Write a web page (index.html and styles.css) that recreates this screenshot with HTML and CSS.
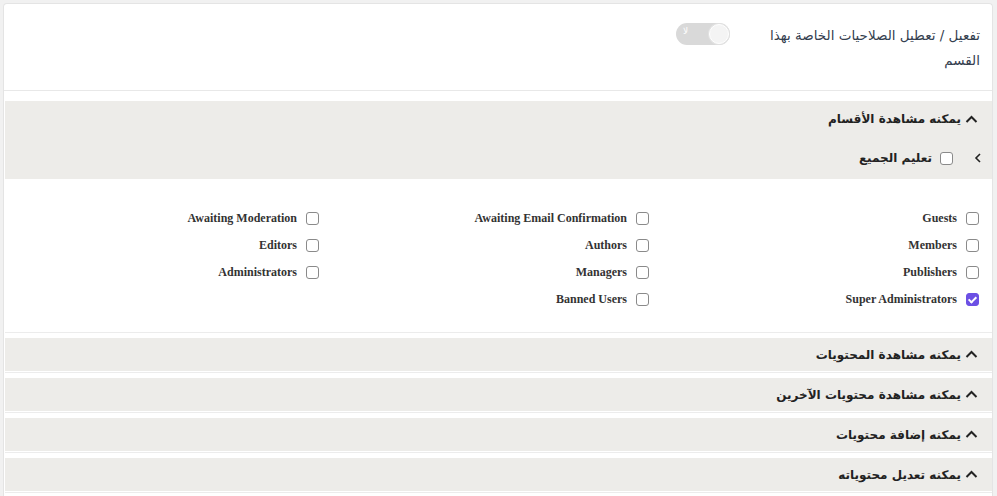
FILE: index.html
```html
<!DOCTYPE html>
<html lang="ar" dir="rtl">

<head>
    <meta charset="UTF-8">
    <meta name="viewport" content="width=device-width, initial-scale=1.0">
    <title>الصلاحيات</title>
    <link rel="stylesheet" href="styles.css">
</head>

<body>

    <div class="card">

        <div class="switch-row">
            <div class="switch-label">تفعيل / تعطيل الصلاحيات الخاصة بهذا القسم</div>
            <div class="switch">
                <span class="switch-text">لا</span>
                <span class="knob"></span>
            </div>
        </div>

        <!-- first group, opened -->
        <div class="panel open">
            <div class="panel-head">
                <svg class="caret" viewBox="0 0 13 13"><polyline points="1.5,9 6.5,4 11.5,9" /></svg>
                <span>يمكنه مشاهدة الأقسام</span>
            </div>
            <div class="select-all">
                <svg class="chevron" viewBox="0 0 8 12"><polyline points="6,2 2,6 6,10" /></svg>
                <span class="box"></span>
                <span>تعليم الجميع</span>
            </div>
            <div class="panel-body">
                <div class="groups">
                    <label class="group"><span class="box"></span>Guests</label>
                    <label class="group"><span class="box"></span>Awaiting Email Confirmation</label>
                    <label class="group"><span class="box"></span>Awaiting Moderation</label>
                    <label class="group"><span class="box"></span>Members</label>
                    <label class="group"><span class="box"></span>Authors</label>
                    <label class="group"><span class="box"></span>Editors</label>
                    <label class="group"><span class="box"></span>Publishers</label>
                    <label class="group"><span class="box"></span>Managers</label>
                    <label class="group"><span class="box"></span>Administrators</label>
                    <label class="group"><span class="box checked"></span>Super Administrators</label>
                    <label class="group"><span class="box"></span>Banned Users</label>
                </div>
            </div>
        </div>

        <div class="panel">
            <div class="panel-head">
                <svg class="caret" viewBox="0 0 13 13"><polyline points="1.5,9 6.5,4 11.5,9" /></svg>
                <span>يمكنه مشاهدة المحتويات</span>
            </div>
        </div>

        <div class="panel">
            <div class="panel-head">
                <svg class="caret" viewBox="0 0 13 13"><polyline points="1.5,9 6.5,4 11.5,9" /></svg>
                <span>يمكنه مشاهدة محتويات الآخرين</span>
            </div>
        </div>

        <div class="panel">
            <div class="panel-head">
                <svg class="caret" viewBox="0 0 13 13"><polyline points="1.5,9 6.5,4 11.5,9" /></svg>
                <span>يمكنه إضافة محتويات</span>
            </div>
        </div>

        <div class="panel">
            <div class="panel-head">
                <svg class="caret" viewBox="0 0 13 13"><polyline points="1.5,9 6.5,4 11.5,9" /></svg>
                <span>يمكنه تعديل محتوياته</span>
            </div>
        </div>

    </div>

</body>

</html>
```

FILE: styles.css
```css
body {
    margin: 0;
    padding: 0;
    background-color: #f1f1f1;
    font-family: "DejaVu Sans", sans-serif;
    color: #333;
}

.card {
    margin: 3px 4px 0 3px;
    background-color: #fff;
    border: 1px solid #e4e4e4;
    border-bottom: none;
    border-radius: 4px 4px 0 0;
    height: 500px;
    overflow: hidden;
}

.switch-row {
    display: flex;
    align-items: flex-start;
    padding: 19px 12px 0 0;
    height: 67px;
    border-bottom: 1px solid #e8e8e8;
    margin-bottom: 10px;
}

.switch-label {
    width: 214px;
    font-size: 13.5px;
    line-height: 25px;
    color: #34404f;
}

.switch {
    position: relative;
    margin-right: 36px;
    width: 54px;
    height: 22px;
    border-radius: 11px;
    background-color: #d9d9d9;
}

.switch-text {
    position: absolute;
    left: 7px;
    top: 3px;
    font-size: 9px;
    color: #fff;
}

.knob {
    position: absolute;
    right: 1px;
    top: 1px;
    width: 18px;
    height: 18px;
    border-radius: 50%;
    background-color: #f4f4f4;
    border: 1px solid #fff;
    box-shadow: 0 0 0 1px #e2e2e2;
}

.panel {
    margin-left: 1px;
    margin-bottom: 5px;
    padding-bottom: 1px;
    border-bottom: 1px solid #ececec;
}

.panel-head {
    display: flex;
    align-items: center;
    gap: 4px;
    height: 33px;
    padding-right: 14px;
    background-color: #edece9;
    font-size: 12px;
    font-weight: bold;
    color: #222;
}

.panel.open .panel-head {
    height: 36px;
}

.caret {
    width: 13px;
    height: 13px;
    fill: none;
    stroke: #222;
    stroke-width: 2;
}

.select-all {
    display: flex;
    align-items: center;
    height: 42px;
    padding-right: 10px;
    box-sizing: border-box;
    background-color: #edece9;
    font-size: 12px;
    font-weight: bold;
    color: #222;
}

.chevron {
    width: 8px;
    height: 12px;
    fill: none;
    stroke: #222;
    stroke-width: 1.6;
    margin-left: 21px;
}

.select-all .box {
    margin-left: 8px;
}

.box {
    display: inline-block;
    flex: none;
    width: 11px;
    height: 11px;
    border: 1px solid #8a8a8a;
    border-radius: 3px;
    background-color: #fff;
    position: relative;
}

.box.checked {
    background-color: #6c50e4;
    border-color: #6c50e4;
}

.box.checked::after {
    content: "";
    position: absolute;
    left: 3px;
    top: 1px;
    width: 3px;
    height: 6px;
    border: solid #fff;
    border-width: 0 2px 2px 0;
    transform: rotate(45deg);
}

.panel-body {
    padding: 26px 13px 18px 0;
}

.groups {
    display: grid;
    grid-template-columns: repeat(3, 330px);
    grid-auto-rows: 27px;
}

.group {
    display: flex;
    align-items: center;
    gap: 9px;
    font-family: "Liberation Serif", serif;
    font-weight: bold;
    font-size: 12px;
    color: #333;
}
```
